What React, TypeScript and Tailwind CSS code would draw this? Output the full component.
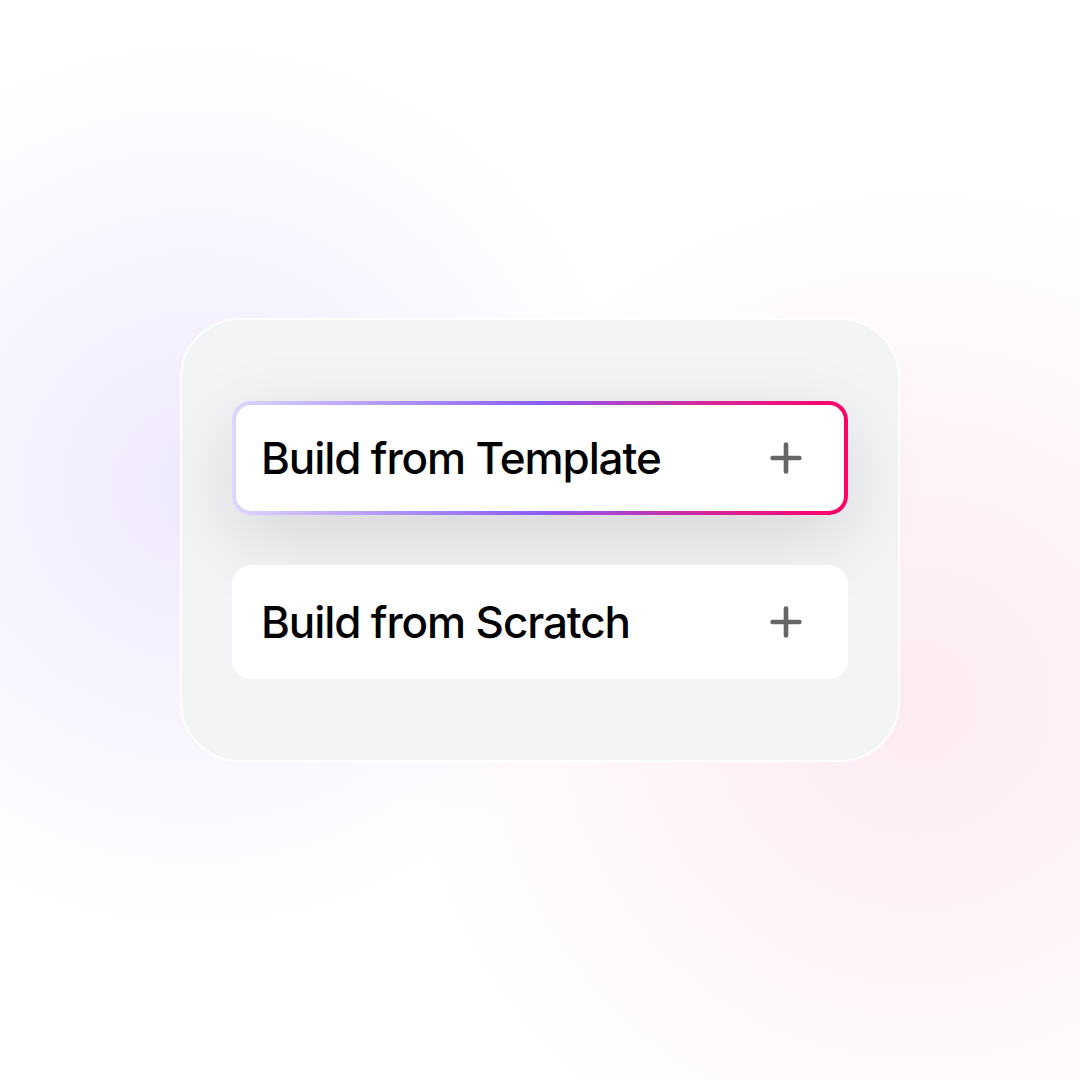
import { Plus } from 'lucide-react';

function Option({ label, active }: { label: string; active?: boolean }) {
  const inner = (
    <div
      className={
        active
          ? 'flex h-[106px] items-center justify-between rounded-[15px] bg-white pl-[25px] pr-[35px]'
          : 'flex h-[114px] items-center justify-between rounded-[20px] bg-white pl-[29px] pr-[39px]'
      }
    >
      <span
        className="text-[44px] font-medium leading-none tracking-[-0.025em] text-black"
        style={{ fontFamily: 'Inter, "Liberation Sans", sans-serif' }}
      >
        {label}
      </span>
      <Plus className="h-[46px] w-[46px] text-[#666666]" strokeWidth={2.4} />
    </div>
  );

  if (!active) return inner;

  return (
    <div className="rounded-[19px] bg-[linear-gradient(90deg,#ddd6fe_0%,#a78bfa_30%,#8b5cf6_50%,#d02aa0_75%,#ff0066_100%)] p-[4px] shadow-[0_24px_80px_rgba(0,0,0,0.12)]">
      {inner}
    </div>
  );
}

export default function App() {
  return (
    <main className="flex h-[1080px] w-[1080px] items-center justify-center bg-white bg-[radial-gradient(circle_at_18%_45%,rgba(196,170,250,0.26),transparent_42%),radial-gradient(circle_at_85%_65%,rgba(248,180,210,0.28),transparent_45%)]">
      <div className="flex h-[444px] w-[720px] flex-col gap-[50px] rounded-[60px] border-2 border-white bg-[#f3f4f6] px-[50px] pt-[81px]">
        <Option label="Build from Template" active />
        <Option label="Build from Scratch" />
      </div>
    </main>
  );
}
